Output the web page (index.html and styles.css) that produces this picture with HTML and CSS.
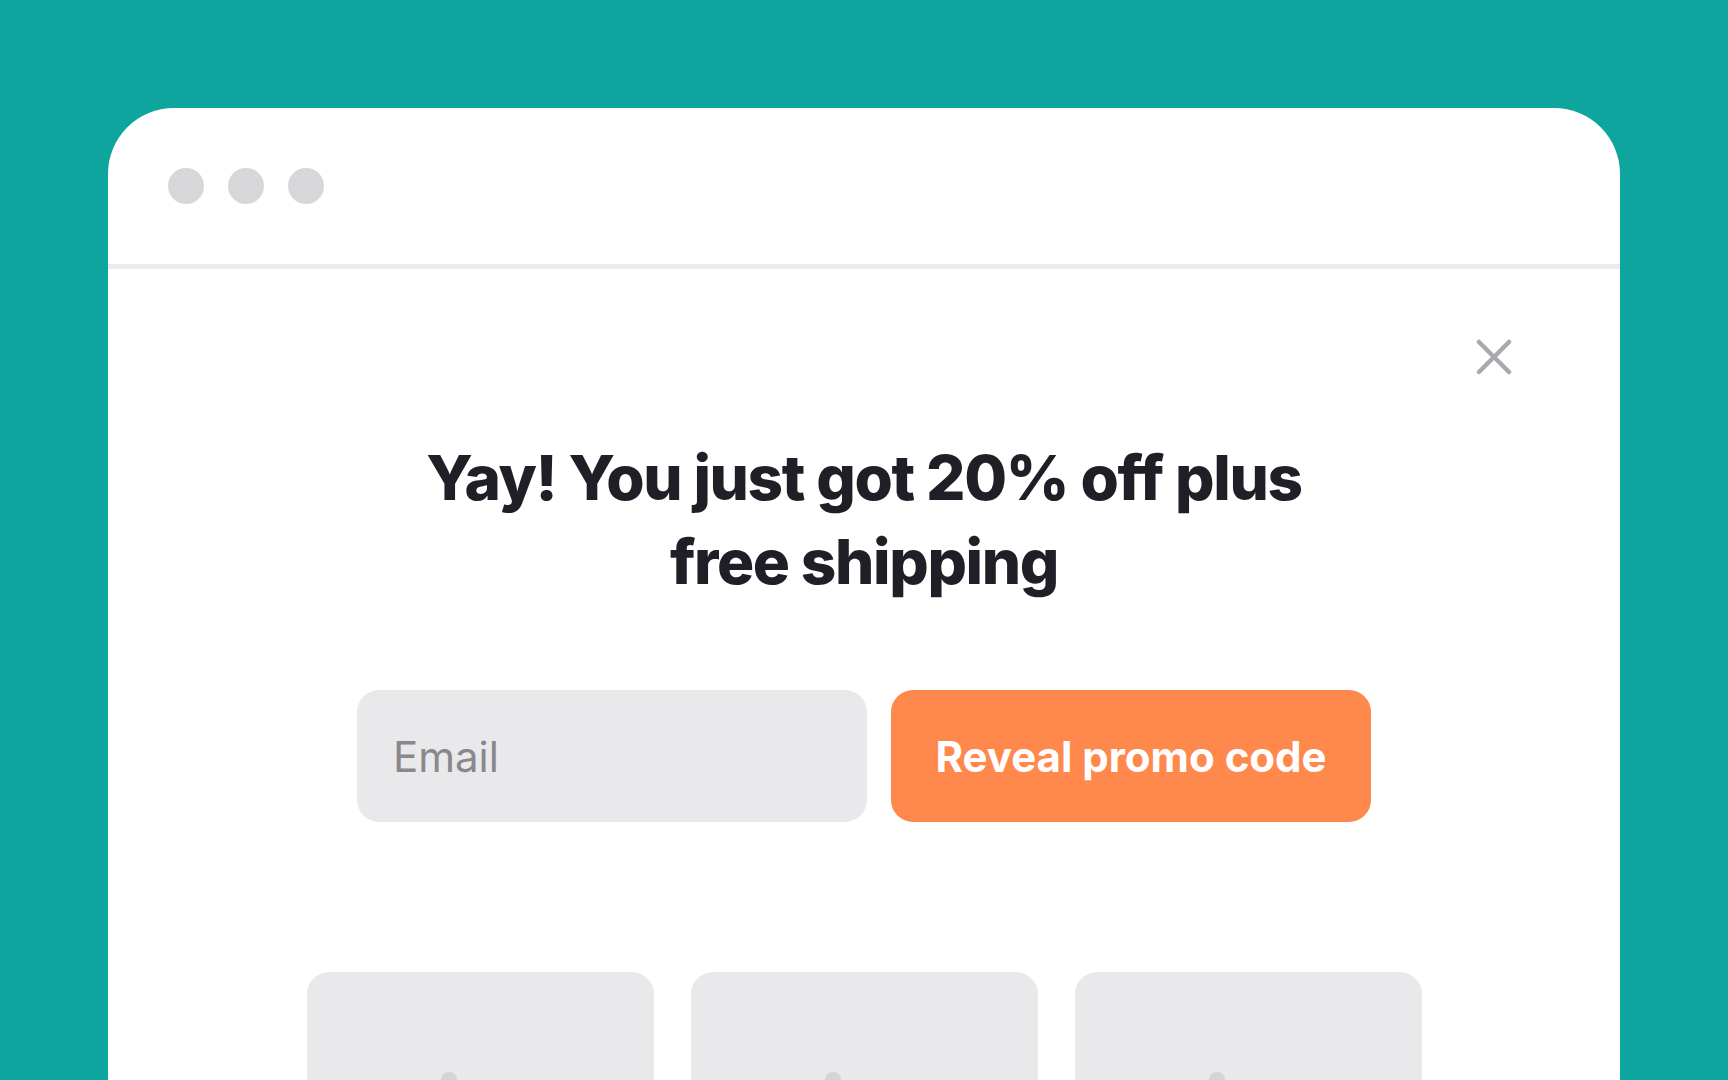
FILE: index.html
```html
<!DOCTYPE html>
<html lang="en">
<head>
<meta charset="utf-8">
<title>Promo popup</title>
<link rel="stylesheet" href="styles.css">
</head>
<body>
<div class="window">
  <div class="titlebar">
    <span class="dot"></span><span class="dot"></span><span class="dot"></span>
  </div>
  <div class="content">
    <div class="close-row">
      <svg class="close" viewBox="0 0 36 36" width="36" height="36" aria-label="Close">
        <path d="M3 3 L33 33 M33 3 L3 33" stroke="#a9a9ad" stroke-width="4.5" stroke-linecap="round" fill="none"/>
      </svg>
    </div>
    <h1 class="headline">Yay! You just got 20% off plus free shipping</h1>
    <form class="signup">
      <input class="email" type="text" placeholder="Email">
      <button class="reveal" type="button">Reveal promo code</button>
    </form>
    <div class="products">
      <div class="product"><span class="sun"></span></div>
      <div class="product"><span class="sun"></span></div>
      <div class="product"><span class="sun"></span></div>
    </div>
  </div>
</div>
</body>
</html>
```

FILE: styles.css
```css
html, body {
  margin: 0;
  padding: 0;
  height: 100%;
  overflow: hidden;
}
body {
  background: #0fa59f;
  font-family: Inter, "Noto Sans", sans-serif;
}
.window {
  margin: 108px 108px 0 108px;
  background: #ffffff;
  border-radius: 66px 66px 0 0;
  height: 1100px;
}
.titlebar {
  height: 156px;
  border-bottom: 5px solid #ebebed;
  display: flex;
  align-items: center;
  gap: 24px;
  padding: 0 0 0 60px;
}
.dot {
  width: 36px;
  height: 36px;
  border-radius: 50%;
  background: #d7d7da;
}
.content {
  display: flex;
  flex-direction: column;
  align-items: center;
}
.close-row {
  align-self: stretch;
  display: flex;
  justify-content: flex-end;
  padding: 70px 108px 0 0;
}
.close {
  display: block;
}
.headline {
  margin: 61px 0 0 0;
  max-width: 940px;
  text-align: center;
  font-size: 62px;
  line-height: 84px;
  font-weight: 800;
  color: #1f1f27;
  letter-spacing: -0.022em;
}
.signup {
  margin: 86px 0 0 0;
  display: flex;
  gap: 24px;
}
.email {
  width: 510px;
  height: 132px;
  box-sizing: border-box;
  border: none;
  outline: none;
  border-radius: 22px;
  background: #e9e9eb;
  padding: 0 0 0 36px;
  font-family: Inter, "Noto Sans", sans-serif;
  font-size: 42px;
  color: #1f1f27;
}
.email::placeholder {
  color: #88888d;
}
.reveal {
  width: 480px;
  height: 132px;
  border: none;
  border-radius: 22px;
  background: #ff884d;
  color: #ffffff;
  font-family: Inter, "Noto Sans", sans-serif;
  font-size: 42px;
  font-weight: 700;
  letter-spacing: 0;
}
.products {
  margin-top: 150px;
  display: flex;
  gap: 37px;
}
.product {
  width: 347px;
  height: 300px;
  border-radius: 22px;
  background: #e9e9eb;
  padding: 100px 0 0 134px;
  box-sizing: border-box;
}
.sun {
  display: block;
  width: 16px;
  height: 16px;
  border-radius: 50%;
  background: #d4d4d8;
}
```
